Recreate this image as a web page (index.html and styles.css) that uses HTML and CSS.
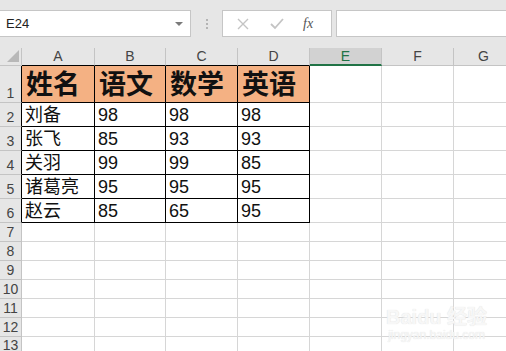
FILE: index.html
```html
<!DOCTYPE html>
<html>
<head>
  <title>Excel</title>
  <meta charset="UTF-8">
  <link rel="stylesheet" href="styles.css">
</head>
<body>
  <div class="toolbar">
    <div class="namebox">
      <span class="ref">E24</span>
      <span class="drop"></span>
    </div>
    <div class="grip"><i></i><i></i><i></i></div>
    <div class="fxbox">
      <svg class="ico" width="12" height="12" viewBox="0 0 12 12"><path d="M1 1L11 11M11 1L1 11" stroke="#c4c4c4" stroke-width="1.4" fill="none"/></svg>
      <svg class="ico" width="14" height="12" viewBox="0 0 14 12"><path d="M1 6L5 10L13 1" stroke="#c4c4c4" stroke-width="1.8" fill="none"/></svg>
      <span class="fx">fx</span>
    </div>
    <div class="formula"></div>
  </div>

  <div class="sheet">
    <div class="row colhead">
      <div class="corner"><span class="tri"></span></div>
      <div class="ch tb">A</div>
      <div class="ch tb">B</div>
      <div class="ch tb">C</div>
      <div class="ch tb">D</div>
      <div class="ch sel">E</div>
      <div class="ch">F</div>
      <div class="ch">G</div>
    </div>
    <div class="row r1">
      <div class="rh tl">1</div>
      <div class="c t head">姓名</div>
      <div class="c t head">语文</div>
      <div class="c t head">数学</div>
      <div class="c t head">英语</div>
      <div class="c"></div><div class="c"></div><div class="c"></div>
    </div>
    <div class="row rd">
      <div class="rh tl">2</div>
      <div class="c t">刘备</div><div class="c t">98</div><div class="c t">98</div><div class="c t">98</div>
      <div class="c"></div><div class="c"></div><div class="c"></div>
    </div>
    <div class="row rd">
      <div class="rh tl">3</div>
      <div class="c t">张飞</div><div class="c t">85</div><div class="c t">93</div><div class="c t">93</div>
      <div class="c"></div><div class="c"></div><div class="c"></div>
    </div>
    <div class="row rd">
      <div class="rh tl">4</div>
      <div class="c t">关羽</div><div class="c t">99</div><div class="c t">99</div><div class="c t">85</div>
      <div class="c"></div><div class="c"></div><div class="c"></div>
    </div>
    <div class="row rd">
      <div class="rh tl">5</div>
      <div class="c t">诸葛亮</div><div class="c t">95</div><div class="c t">95</div><div class="c t">95</div>
      <div class="c"></div><div class="c"></div><div class="c"></div>
    </div>
    <div class="row rd">
      <div class="rh tl">6</div>
      <div class="c t">赵云</div><div class="c t">85</div><div class="c t">65</div><div class="c t">95</div>
      <div class="c"></div><div class="c"></div><div class="c"></div>
    </div>
    <div class="row re"><div class="rh">7</div><div class="c"></div><div class="c"></div><div class="c"></div><div class="c"></div><div class="c"></div><div class="c"></div><div class="c"></div></div>
    <div class="row re"><div class="rh">8</div><div class="c"></div><div class="c"></div><div class="c"></div><div class="c"></div><div class="c"></div><div class="c"></div><div class="c"></div></div>
    <div class="row re"><div class="rh">9</div><div class="c"></div><div class="c"></div><div class="c"></div><div class="c"></div><div class="c"></div><div class="c"></div><div class="c"></div></div>
    <div class="row re"><div class="rh">10</div><div class="c"></div><div class="c"></div><div class="c"></div><div class="c"></div><div class="c"></div><div class="c"></div><div class="c"></div></div>
    <div class="row re"><div class="rh">11</div><div class="c"></div><div class="c"></div><div class="c"></div><div class="c"></div><div class="c"></div><div class="c"></div><div class="c"></div></div>
    <div class="row re"><div class="rh">12</div><div class="c"></div><div class="c"></div><div class="c"></div><div class="c"></div><div class="c"></div><div class="c"></div><div class="c"></div></div>
    <div class="row re last"><div class="rh">13</div><div class="c"></div><div class="c"></div><div class="c"></div><div class="c"></div><div class="c"></div><div class="c"></div><div class="c"></div></div>

    <div class="watermark">
      <div class="wm-logo">Bai<span class="paw">du</span> 经验</div>
      <div class="wm-url">jingyan.baidu.com</div>
    </div>
  </div>
</body>
</html>
```

FILE: styles.css
```css
body {
  margin: 0;
  background-color: #ffffff;
  font-family: "Liberation Sans", "Noto Sans CJK SC", sans-serif;
  overflow: hidden;
}
.toolbar {
  display: flex;
  align-items: flex-start;
  height: 48px;
  padding-top: 10px;
  box-sizing: border-box;
  background-color: #e6e6e6;
}
.namebox {
  width: 191px;
  height: 27px;
  box-sizing: border-box;
  background-color: #fff;
  border: 1px solid #c6c6c6;
  border-left: none;
  display: flex;
  align-items: center;
  justify-content: space-between;
  padding: 0 7px 0 6px;
}
.ref {
  font-size: 13px;
  color: #222;
}
.drop {
  width: 0;
  height: 0;
  border-left: 4px solid transparent;
  border-right: 4px solid transparent;
  border-top: 4px solid #7a7a7a;
}
.grip {
  width: 31px;
  height: 27px;
  display: flex;
  flex-direction: column;
  align-items: center;
  justify-content: center;
  gap: 2px;
}
.grip i {
  width: 2px;
  height: 2px;
  background-color: #b4b4b4;
}
.fxbox {
  width: 110px;
  height: 27px;
  box-sizing: border-box;
  background-color: #fff;
  border: 1px solid #c6c6c6;
  display: flex;
  align-items: center;
  padding-left: 14px;
  gap: 21px;
}
.fx {
  font-family: "Liberation Serif", serif;
  font-style: italic;
  font-size: 14px;
  color: #555;
  margin-left: -2px;
}
.formula {
  flex: 1;
  height: 27px;
  margin-left: 4px;
  box-sizing: border-box;
  background-color: #fff;
  border: 1px solid #c6c6c6;
  border-right: none;
}

.sheet {
  position: relative;
}
.row {
  display: grid;
  grid-template-columns: 22px 73px 71px 72px 72px 72px 72px 60px;
}
.row > div {
  box-sizing: border-box;
  border-right: 1px solid #d6d6d6;
  border-bottom: 1px solid #d6d6d6;
}
.colhead {
  height: 18px;
  background-color: #e6e6e6;
}
.colhead > div {
  border-right: 1px solid #c4c4c4;
  border-bottom: 1px solid #c4c4c4;
}
.ch {
  font-size: 14px;
  color: #444;
  text-align: center;
  line-height: 17px;
}
.colhead > .tb {
  border-bottom-color: #000;
}
.colhead > .sel {
  background-color: #d2d2d2;
  color: #217346;
  border-bottom: 2px solid #217346;
  line-height: 16px;
}
.corner {
  position: relative;
}
.tri {
  position: absolute;
  right: 2px;
  bottom: 3px;
  width: 0;
  height: 0;
  border-left: 12px solid transparent;
  border-bottom: 12px solid #b8b8b8;
}
.rh {
  background-color: #e6e6e6;
  font-size: 14px;
  color: #444;
  display: flex;
  align-items: flex-end;
  justify-content: center;
  line-height: 16px;
  padding-bottom: 1px;
}
.row > .rh {
  border-right-color: #c4c4c4;
  border-bottom-color: #c4c4c4;
}
.row > .tl {
  border-right-color: #000;
}
.r1 {
  height: 37px;
}
.rd {
  height: 24px;
}
.re {
  height: 19px;
}
.last .rh {
  align-items: flex-start;
  padding-top: 0;
}
.c {
  display: flex;
  align-items: flex-end;
  padding-left: 3px;
  font-size: 18px;
  line-height: 22px;
  color: #111;
  white-space: nowrap;
}
.row > .t {
  border-right-color: #000;
  border-bottom-color: #000;
}
.head {
  background-color: #f4b183;
  font-size: 27px;
  font-weight: bold;
  line-height: 34px;
  padding-left: 4px;
}
.watermark {
  position: absolute;
  left: 386px;
  top: 258px;
  color: #f7f7f7;
  text-shadow: 0 0 1px #dadada;
  text-align: center;
}
.wm-logo {
  font-size: 20px;
  font-weight: bold;
  line-height: 22px;
}
.wm-url {
  font-size: 12px;
  line-height: 15px;
}
```
